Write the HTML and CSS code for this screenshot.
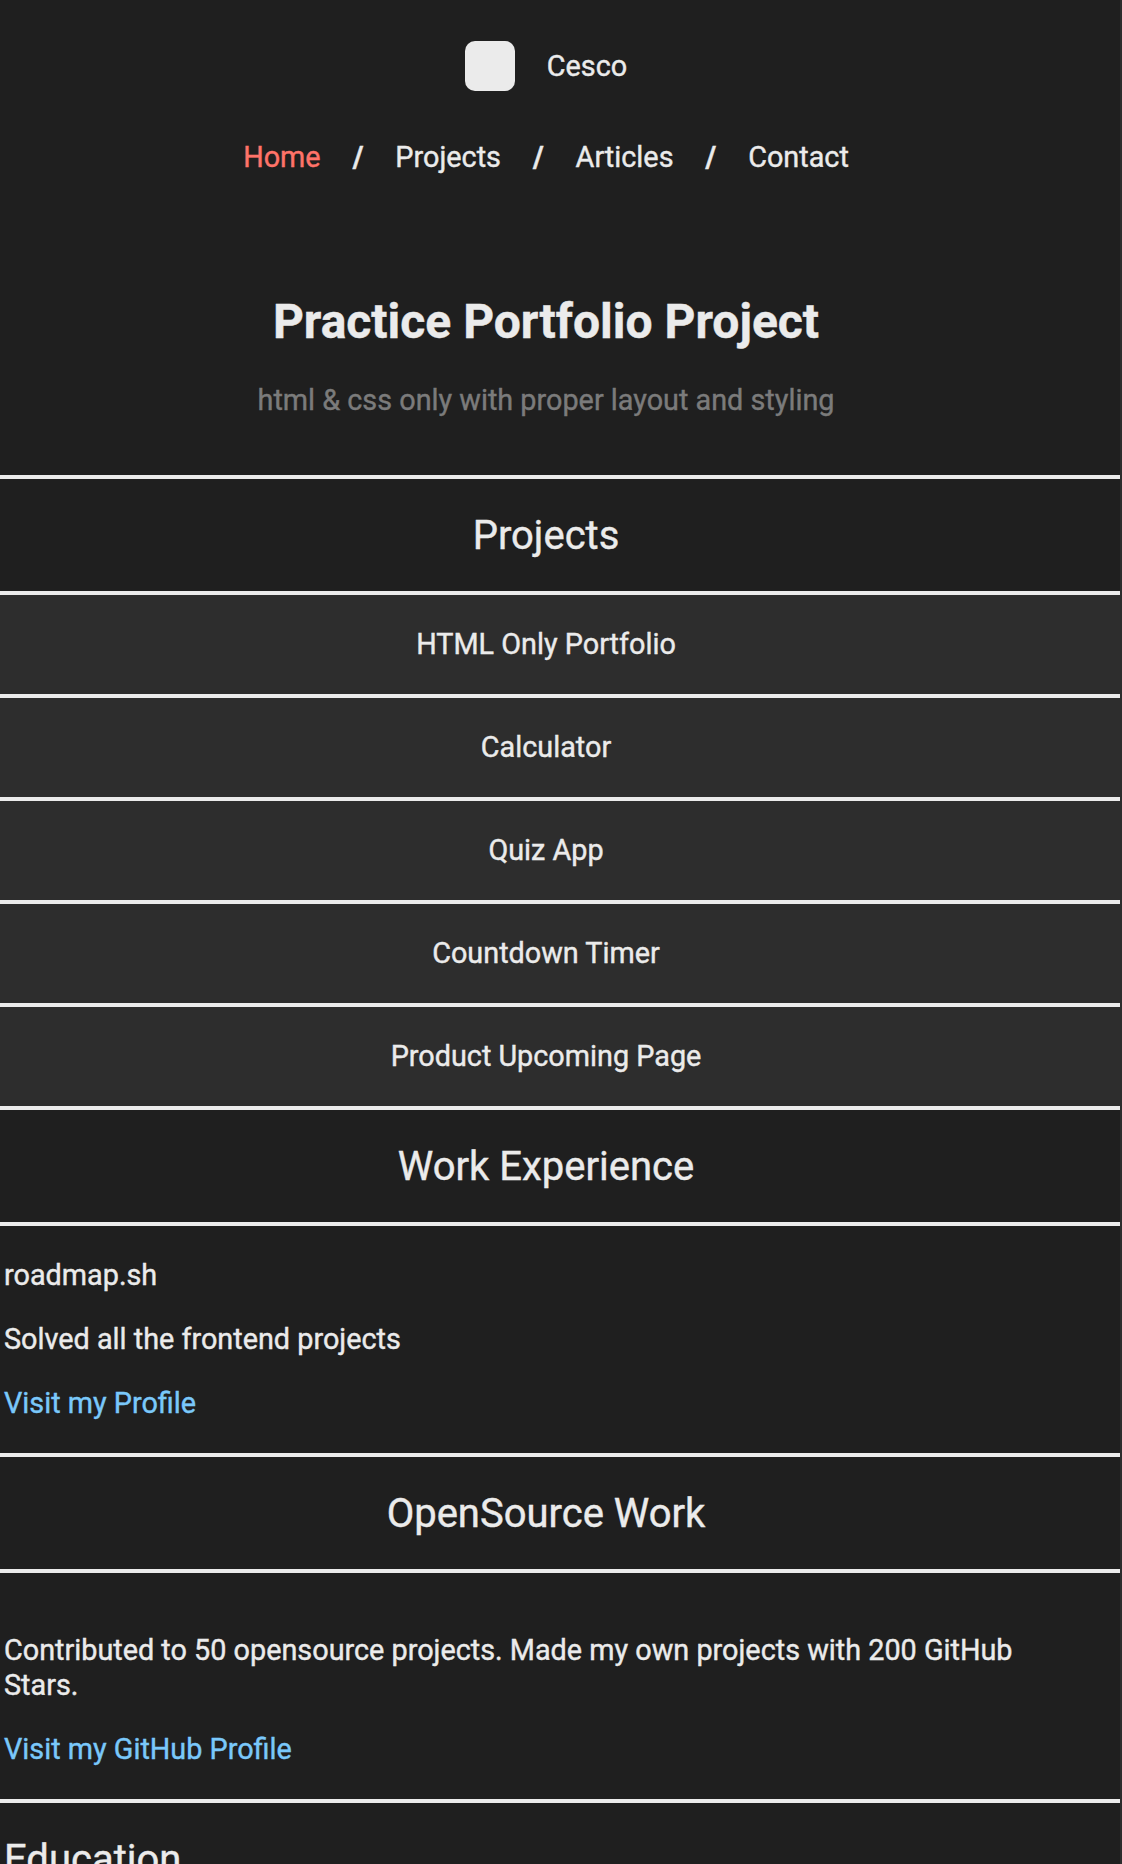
FILE: index.html
```html
<!DOCTYPE html>
<html lang="en">
<head>
<meta charset="utf-8">
<title>Practice Portfolio Project</title>
<link rel="stylesheet" href="styles.css">
</head>
<body>
<div class="page">
  <header class="header">
    <div class="brand"><span class="logo"></span><span>Cesco</span></div>
    <nav class="nav">
      <a class="nav-link active" href="#">Home</a><span class="slash">/</span>
      <a class="nav-link" href="#">Projects</a><span class="slash">/</span>
      <a class="nav-link" href="#">Articles</a><span class="slash">/</span>
      <a class="nav-link" href="#">Contact</a>
    </nav>
  </header>
  <section class="hero">
    <h1 class="title">Practice Portfolio Project</h1>
    <p class="subtitle">html &amp; css only with proper layout and styling</p>
  </section>
  <h2 class="heading">Projects</h2>
  <ul class="projects">
    <li class="project">HTML Only Portfolio</li>
    <li class="project">Calculator</li>
    <li class="project">Quiz App</li>
    <li class="project">Countdown Timer</li>
    <li class="project">Product Upcoming Page</li>
  </ul>
  <h2 class="heading">Work Experience</h2>
  <section class="details">
    <p>roadmap.sh</p>
    <p>Solved all the frontend projects</p>
    <a class="link" href="#">Visit my Profile</a>
  </section>
  <h2 class="heading">OpenSource Work</h2>
  <section class="details details-spaced">
    <p>Contributed to 50 opensource projects. Made my own projects with 200 GitHub Stars.</p>
    <a class="link" href="#">Visit my GitHub Profile</a>
  </section>
  <h2 class="heading heading-left">Education</h2>
</div>
</body>
</html>
```
FILE: styles.css
```css
* { box-sizing: border-box; margin: 0; padding: 0; }
html { background: #2d2d2d; }
body {
  height: 1864px;
  overflow: hidden;
  font: 28.8px/35px Roboto, sans-serif;
  color: #ebebeb;
  -webkit-text-stroke: 0.4px currentColor;
}
.page { margin-right: 2px; background: #1f1f1f; }
a { color: inherit; text-decoration: none; }
.header, .hero { padding-right: 28px; }
.brand {
  display: flex;
  justify-content: center;
  align-items: center;
  gap: 32px;
  padding-top: 41px;
}
.logo { width: 50px; height: 50px; border-radius: 10px; background: #ebebeb; }
.nav {
  display: flex;
  justify-content: center;
  gap: 32px;
  padding-top: 49px;
}
.nav .active { color: #ff7369; }
.slash { font-weight: 700; }
.hero { padding-top: 119px; height: 300px; text-align: center; }
.title { font-size: 48px; line-height: 56px; font-weight: 700; }
.subtitle { margin-top: 33px; color: #7b7b7b; }
.heading {
  height: 120px;
  margin-bottom: -4px;
  padding: 33px 32px 31px 4px;
  border: solid #ebebeb;
  border-width: 4px 0;
  font-size: 40px;
  line-height: 48px;
  font-weight: 400;
  text-align: center;
}
.heading-left { text-align: left; }
.projects { list-style: none; padding-top: 4px; }
.project {
  height: 103px;
  padding: 32px 32px 32px 4px;
  border-bottom: 4px solid #ebebeb;
  background: #2d2d2d;
  text-align: center;
}
.projects + .heading { margin-top: -4px; }
.details {
  display: flex;
  flex-direction: column;
  gap: 29px;
  padding: 36px 32px 32px 4px;
}
.details-spaced { padding-top: 64px; }
.link { color: #7ac8fa; }
```
